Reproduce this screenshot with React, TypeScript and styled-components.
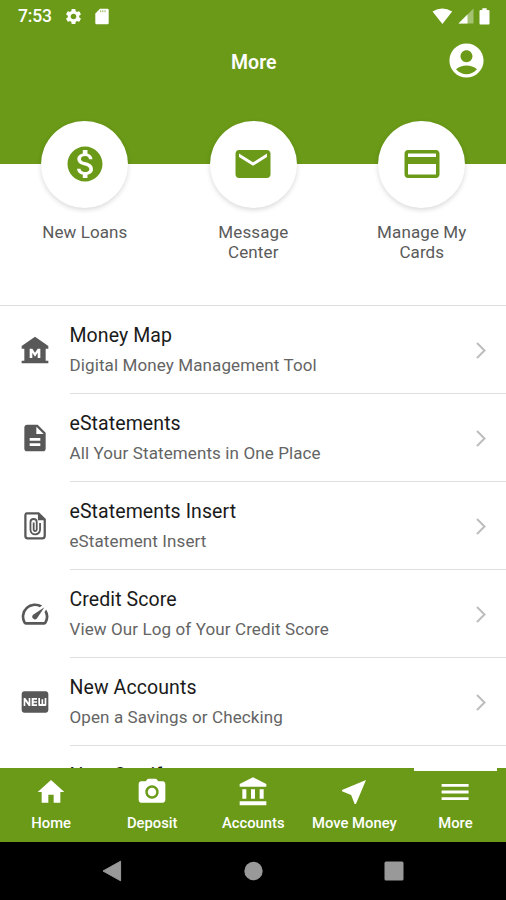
import React from 'react';
import styled, { createGlobalStyle } from 'styled-components';
import {
  MdAccountBalance,
  MdAccountCircle,
  MdCameraAlt,
  MdCreditCard,
  MdDescription,
  MdEmail,
  MdFiberNew,
  MdHome,
  MdMonetizationOn,
  MdMuseum,
  MdNearMe,
  MdSettings,
  MdSpeed,
} from 'react-icons/md';

const GREEN = '#6a9a17';

const GlobalStyle = createGlobalStyle`
  * { box-sizing: border-box; }
  body { margin: 0; background: #fff; font-family: Roboto, sans-serif; }
  svg { display: block; flex: none; }
`;

const Screen = styled.div`
  width: 506px;
  height: 900px;
  display: flex;
  flex-direction: column;
  overflow: hidden;
  background: #fff;
`;

const Header = styled.header`
  flex: none;
  height: 163.5px;
  background: ${GREEN};
  color: #fff;
`;

const StatusBar = styled.div`
  height: 32px;
  padding: 0 16px 0 18px;
  display: flex;
  align-items: center;
  justify-content: space-between;
`;

const StatusGroup = styled.div<{ $gap: number }>`
  display: flex;
  align-items: center;
  gap: ${(p) => p.$gap}px;
`;

const Clock = styled.span`
  font-size: 17.5px;
  font-weight: 500;
  letter-spacing: -0.2px;
`;

const TitleBar = styled.div`
  height: 57px;
  padding: 0 19.5px 0 21px;
  display: grid;
  grid-template-columns: 41px 1fr 41px;
  align-items: center;
`;

const Title = styled.h1`
  grid-column: 2;
  margin: 3px 0 0;
  text-align: center;
  font-size: 19.5px;
  font-weight: 600;
`;

const Shortcuts = styled.section`
  flex: none;
  height: 141.5px;
  padding-left: 0.6px;
  display: grid;
  grid-template-columns: repeat(3, 1fr);
`;

const Shortcut = styled.div`
  display: flex;
  flex-direction: column;
  align-items: center;
  margin-top: -42.5px;
`;

const Disc = styled.div`
  width: 87px;
  height: 87px;
  border-radius: 50%;
  background: #fff;
  color: ${GREEN};
  display: grid;
  place-items: center;
  padding-bottom: 1px;
  box-shadow: 0 2px 5px rgba(0, 0, 0, 0.15);
`;

const ShortcutLabel = styled.div`
  width: 104px;
  margin-top: 14px;
  text-align: center;
  font-size: 17px;
  line-height: 20.3px;
  letter-spacing: 0.1px;
  color: #5a5a5a;
`;

const List = styled.main`
  flex: 1;
  min-height: 0;
  overflow: hidden;
  border-top: 1.5px solid #dedede;
`;

const Row = styled.div`
  height: 88px;
  display: flex;
`;

const RowIcon = styled.div`
  width: 69.5px;
  flex: none;
  display: grid;
  place-items: center;
  color: #585858;
`;

const RowBody = styled.div`
  flex: 1;
  display: flex;
  align-items: center;
  justify-content: space-between;
  padding: 1px 18.5px 0 0;
  border-bottom: 1.5px solid #dfdfdf;
`;

const RowCopy = styled.div`
  padding-bottom: 2px;
`;

const RowTitle = styled.div`
  font-size: 19.5px;
  line-height: 28px;
  letter-spacing: 0.09px;
  color: #1a1a1a;
`;

const RowText = styled.div`
  font-size: 17px;
  line-height: 24px;
  margin-top: 3px;
  letter-spacing: 0.11px;
  color: #646464;
`;

const TabBar = styled.nav`
  flex: none;
  height: 74px;
  padding-left: 0.6px;
  background: ${GREEN};
  color: #fff;
  display: grid;
  grid-template-columns: repeat(5, 1fr);
`;

const Tab = styled.div<{ $active?: boolean }>`
  display: flex;
  flex-direction: column;
  align-items: center;
  padding-top: 8px;
  position: relative;
  &::before {
    content: '';
    display: ${(p) => (p.$active ? 'block' : 'none')};
    position: absolute;
    top: -1px;
    left: 9px;
    width: 83px;
    height: 3.5px;
    background: #fff;
  }
`;

const TabLabel = styled.span`
  margin-top: 6px;
  font-size: 14.8px;
  line-height: 18px;
  font-weight: 500;
  white-space: nowrap;
`;

const SystemBar = styled.footer`
  flex: none;
  height: 58px;
  background: #000;
  padding: 0 102px;
  display: flex;
  align-items: center;
  justify-content: space-between;
`;

const Chevron = () => (
  <svg width="14" height="20" viewBox="0 0 14 20">
    <path d="M3 3l7.500 7.500L3 18" fill="none" stroke="#bdbdbd" strokeWidth="2" />
  </svg>
);

const AttachmentIcon = () => (
  <svg width="32" height="32" viewBox="0 0 24 24" fill="none" stroke="currentColor">
    <path d="M5.800 2.600h8.800l4.700 4.600v12.100q0 1.900-1.700 1.900H6.400q-1.600 0-1.600-1.700V4.200q0-1.600 1-1.600z" strokeWidth="1.700" />
    <path d="M14.200 2.300v5.400h5.300z" fill="currentColor" stroke="none" />
    <path d="M15.800 9.800v4.900a3.600 3.600 0 0 1-7.200 0V9.100a2.350 2.350 0 0 1 4.700 0v5.600a1.150 1.150 0 0 1-2.300 0V9.300" strokeWidth="1.350" />
  </svg>
);

const MenuIcon = () => (
  <svg width="32" height="32" viewBox="0 0 32 32" fill="#fff">
    <path d="M2.600 8h27v2.800h-27zM2.600 14.600h27v2.800h-27zM2.600 21.200h27V24h-27z" />
  </svg>
);

const SdCardIcon = () => (
  <svg width="14" height="17" viewBox="0 0 14 17">
    <path d="M5 .7h7.400q1.300 0 1.300 1.300v13q0 1.300-1.300 1.300H1.600Q.3 16.300.3 15V5.400z" fill="#fff" />
    <path d="M5 2.200h1.200v2H5zM7.200 2.200h1.200v2H7.200zM9.400 2.200h1.200v2H9.400z" fill={GREEN} opacity=".6" />
  </svg>
);

const WifiIcon = () => (
  <svg width="21" height="17" viewBox="0 0 21 17">
    <path d="M.5 3.400Q10.300-2.600 20.200 3.400L10.400 16z" fill="#fff" />
  </svg>
);

const SignalIcon = () => (
  <svg width="16" height="16" viewBox="0 0 16 16">
    <path d="M15.500.5v15H.5z" fill="#fff" opacity=".4" />
    <path d="M9.500 6.500v9H.5z" fill="#fff" />
  </svg>
);

const BatteryIcon = () => (
  <svg width="11" height="17" viewBox="0 0 11 17">
    <path d="M3.300.3h4.400v1.600h1.600q1.200 0 1.200 1.200v12.300q0 1.200-1.200 1.200H1.700q-1.200 0-1.200-1.200V3.100q0-1.200 1.200-1.200h1.600z" fill="#fff" />
  </svg>
);

const BackIcon = () => (
  <svg width="20" height="22" viewBox="0 0 20 22">
    <path d="M18.600 1.200v19.600L1 11z" fill="#999" stroke="#999" strokeLinejoin="round" />
  </svg>
);

const HomeButtonIcon = () => (
  <svg width="20" height="20" viewBox="0 0 20 20">
    <circle cx="10.500" cy="10" r="9.200" fill="#999" />
  </svg>
);

const RecentsIcon = () => (
  <svg width="20" height="20" viewBox="0 0 20 20">
    <rect x=".5" y=".5" width="19" height="19" rx="1.500" fill="#999" />
  </svg>
);

const shortcuts = [
  { icon: <MdMonetizationOn size={42} />, label: 'New Loans' },
  { icon: <MdEmail size={42} />, label: 'Message Center' },
  { icon: <MdCreditCard size={42} />, label: 'Manage My Cards' },
];

const rows = [
  { icon: <MdMuseum size={32} />, title: 'Money Map', text: 'Digital Money Management Tool' },
  { icon: <MdDescription size={32} />, title: 'eStatements', text: 'All Your Statements in One Place' },
  { icon: <AttachmentIcon />, title: 'eStatements Insert', text: 'eStatement Insert' },
  { icon: <MdSpeed size={32} />, title: 'Credit Score', text: 'View Our Log of Your Credit Score' },
  { icon: <MdFiberNew size={32} />, title: 'New Accounts', text: 'Open a Savings or Checking' },
  { icon: null, title: 'New Certif', text: '' },
];

const tabs = [
  { icon: <MdHome size={32} />, label: 'Home' },
  { icon: <MdCameraAlt size={32} />, label: 'Deposit' },
  { icon: <MdAccountBalance size={32} />, label: 'Accounts' },
  { icon: <MdNearMe size={32} />, label: 'Move Money' },
  { icon: <MenuIcon />, label: 'More', active: true },
];

export default function App() {
  return (
    <Screen>
      <GlobalStyle />
      <Header>
        <StatusBar>
          <StatusGroup $gap={12}>
            <Clock>7:53</Clock>
            <MdSettings size={19} />
            <SdCardIcon />
          </StatusGroup>
          <StatusGroup $gap={5}>
            <WifiIcon />
            <SignalIcon />
            <BatteryIcon />
          </StatusGroup>
        </StatusBar>
        <TitleBar>
          <Title>More</Title>
          <MdAccountCircle size={41} />
        </TitleBar>
      </Header>
      <Shortcuts>
        {shortcuts.map((s) => (
          <Shortcut key={s.label}>
            <Disc>{s.icon}</Disc>
            <ShortcutLabel>{s.label}</ShortcutLabel>
          </Shortcut>
        ))}
      </Shortcuts>
      <List>
        {rows.map((r) => (
          <Row key={r.title}>
            <RowIcon>{r.icon}</RowIcon>
            <RowBody>
              <RowCopy>
                <RowTitle>{r.title}</RowTitle>
                <RowText>{r.text || '\u00a0'}</RowText>
              </RowCopy>
              <Chevron />
            </RowBody>
          </Row>
        ))}
      </List>
      <TabBar>
        {tabs.map((t) => (
          <Tab key={t.label} $active={t.active}>
            {t.icon}
            <TabLabel>{t.label}</TabLabel>
          </Tab>
        ))}
      </TabBar>
      <SystemBar>
        <BackIcon />
        <HomeButtonIcon />
        <RecentsIcon />
      </SystemBar>
    </Screen>
  );
}
